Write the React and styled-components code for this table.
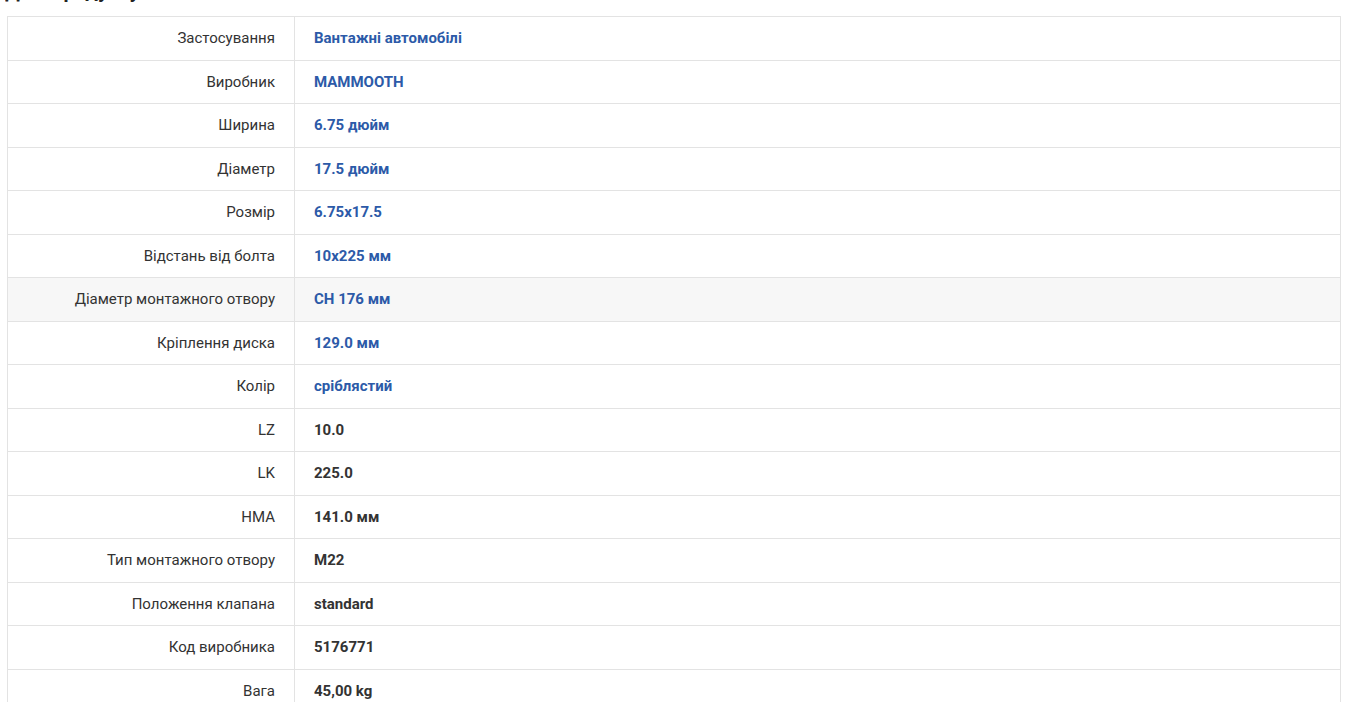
import React from 'react';
import styled, { createGlobalStyle } from 'styled-components';

const rows = [
  { label: 'Застосування', value: 'Вантажні автомобілі', link: true },
  { label: 'Виробник', value: 'MAMMOOTH', link: true },
  { label: 'Ширина', value: '6.75 дюйм', link: true },
  { label: 'Діаметр', value: '17.5 дюйм', link: true },
  { label: 'Розмір', value: '6.75x17.5', link: true },
  { label: 'Відстань від болта', value: '10x225 мм', link: true },
  { label: 'Діаметр монтажного отвору', value: 'CH 176 мм', link: true, hover: true },
  { label: 'Кріплення диска', value: '129.0 мм', link: true },
  { label: 'Колір', value: 'сріблястий', link: true },
  { label: 'LZ', value: '10.0' },
  { label: 'LK', value: '225.0' },
  { label: 'HMA', value: '141.0 мм' },
  { label: 'Тип монтажного отвору', value: 'M22' },
  { label: 'Положення клапана', value: 'standard' },
  { label: 'Код виробника', value: '5176771' },
  { label: 'Вага', value: '45,00 kg' },
];

export default function App() {
  return (
    <>
      <GlobalStyle />
      <Page>
        <Heading>Дані продукту</Heading>
        <Table>
          {rows.map((row, i) => (
            <Row key={i} $hover={row.hover}>
              <Label>{row.label}</Label>
              <Value>
                {row.link ? <a href="#">{row.value}</a> : row.value}
              </Value>
            </Row>
          ))}
        </Table>
      </Page>
    </>
  );
}

const GlobalStyle = createGlobalStyle`
  html, body {
    margin: 0;
    padding: 0;
    background: #fff;
    overflow: hidden;
  }
  body {
    font-family: Roboto, "Liberation Sans", sans-serif;
    color: #333;
  }
`

const Page = styled.div`
  padding: 0 8px 0 7px;
`

const Heading = styled.h2`
  margin: -22px 0 0 -2px;
  height: 38px;
  font-size: 20px;
  line-height: 26px;
  font-weight: 700;
  color: #222;
  overflow: hidden;
`

const Table = styled.div`
  border: 1px solid #e3e3e3;
  border-bottom: none;
`

const Row = styled.div`
  display: grid;
  grid-template-columns: 287px 1fr;
  height: 43.5px;
  box-sizing: border-box;
  border-bottom: 1px solid #e3e3e3;
  background: ${p => (p.$hover ? '#f7f7f7' : '#fff')};
`

const Label = styled.div`
  display: flex;
  align-items: center;
  justify-content: flex-end;
  padding-right: 19px;
  border-right: 1px solid #e3e3e3;
  font-size: 15px;
  color: #333;
`

const Value = styled.div`
  display: flex;
  align-items: center;
  padding-left: 19px;
  font-size: 15px;
  font-weight: 700;
  color: #333;
  a {
    color: #2c5aa8;
    text-decoration: none;
  }
`
